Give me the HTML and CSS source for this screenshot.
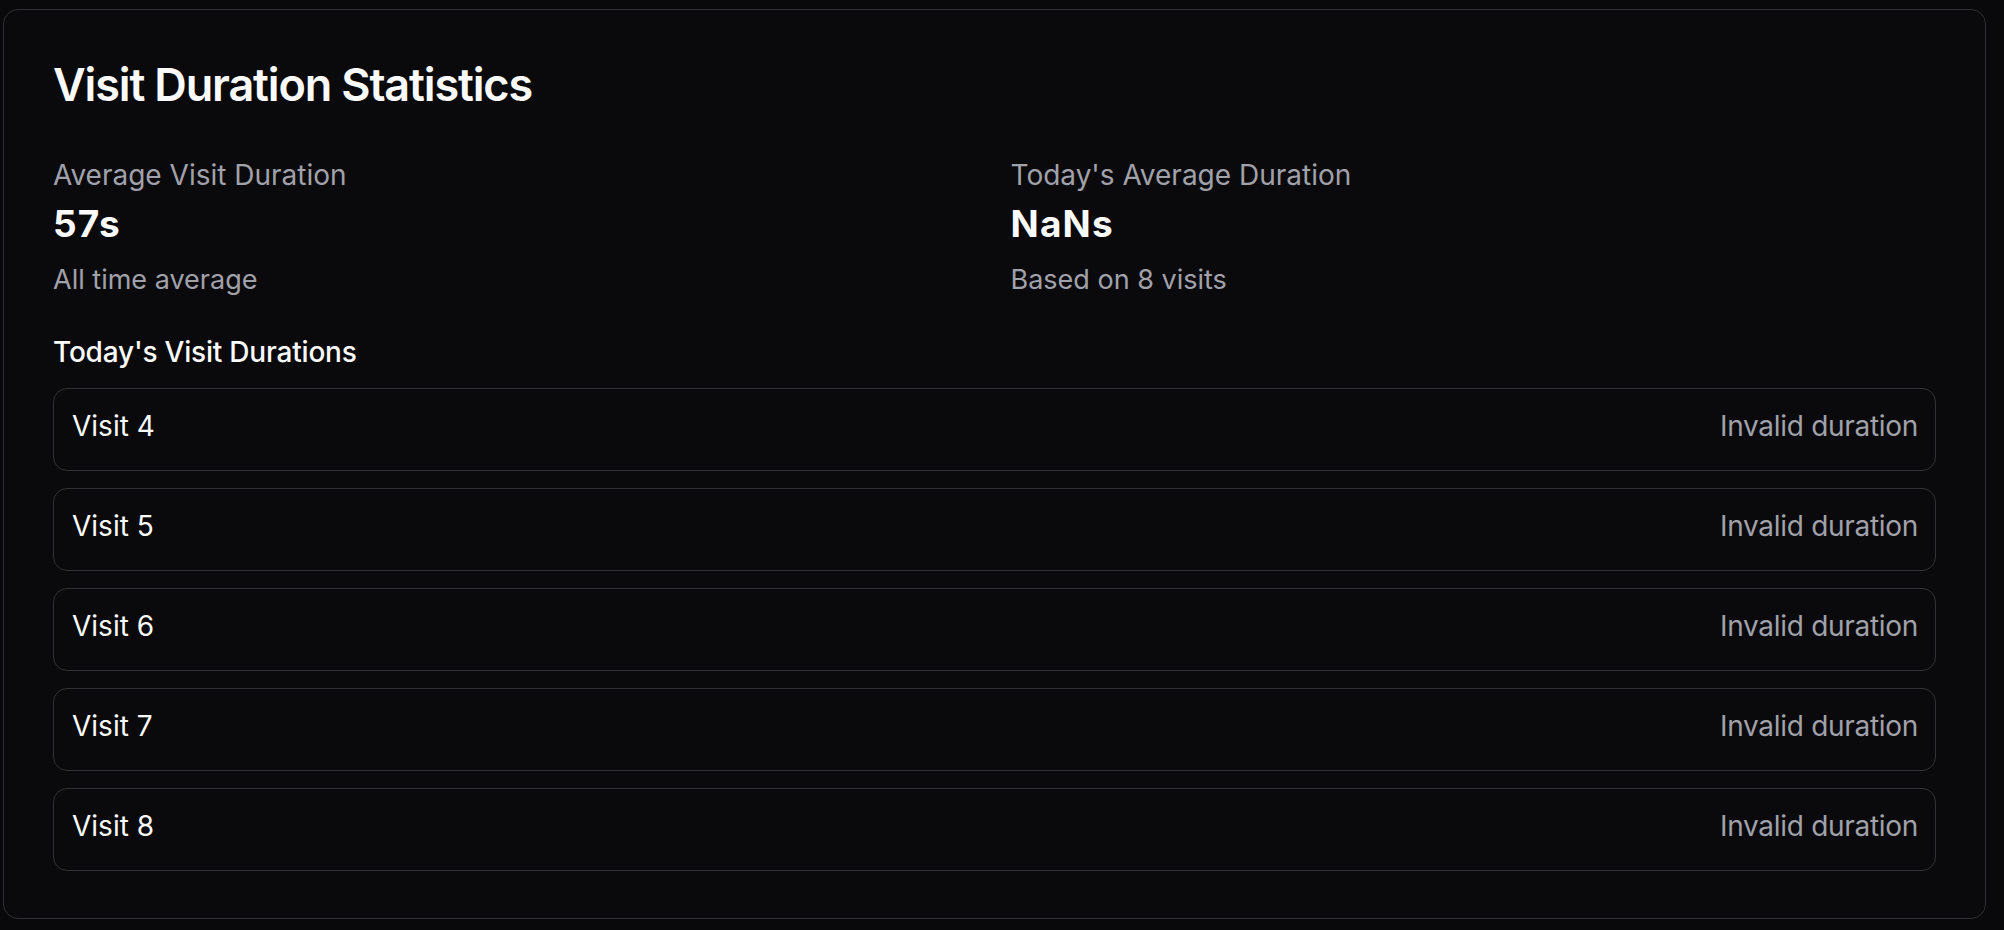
FILE: index.html
```html
<!DOCTYPE html>
<html lang="en">
<head>
<meta charset="utf-8">
<title>Visit Duration Statistics</title>
<link rel="stylesheet" href="styles.css">
</head>
<body>
<div class="card">
  <h1 class="title">Visit Duration Statistics</h1>
  <div class="stats">
    <div class="stat">
      <div class="stat-label">Average Visit Duration</div>
      <div class="stat-value">57s</div>
      <div class="stat-sub">All time average</div>
    </div>
    <div class="stat">
      <div class="stat-label">Today's Average Duration</div>
      <div class="stat-value">NaNs</div>
      <div class="stat-sub">Based on 8 visits</div>
    </div>
  </div>
  <h2 class="section-title">Today's Visit Durations</h2>
  <ul class="visits">
    <li class="visit"><span class="visit-name">Visit 4</span><span class="visit-dur">Invalid duration</span></li>
    <li class="visit"><span class="visit-name">Visit 5</span><span class="visit-dur">Invalid duration</span></li>
    <li class="visit"><span class="visit-name">Visit 6</span><span class="visit-dur">Invalid duration</span></li>
    <li class="visit"><span class="visit-name">Visit 7</span><span class="visit-dur">Invalid duration</span></li>
    <li class="visit"><span class="visit-name">Visit 8</span><span class="visit-dur">Invalid duration</span></li>
  </ul>
</div>
</body>
</html>
```
FILE: styles.css
```css
html, body {
  margin: 0;
  padding: 0;
  background: #09090b;
}
body {
  font-family: Inter, "Noto Sans", sans-serif;
  color: #fafafa;
  padding: 9px 18px 10px 3px;
}
.card {
  border: 1px solid #303034;
  border-radius: 15px;
  background: #0a0a0c;
  padding: 48px 49px 0 49px;
  height: 910px;
  box-sizing: border-box;
}
.title {
  margin: 0;
  font-size: 45px;
  line-height: 54px;
  font-weight: 600;
  letter-spacing: -1.15px;
  color: #fafafa;
}
.stats {
  display: grid;
  grid-template-columns: 1fr 1fr;
  column-gap: 32px;
  margin-top: 43px;
}
.stat-label {
  font-size: 28px;
  line-height: 40px;
  color: #a1a1aa;
}
.stat-value {
  font-size: 37px;
  line-height: 40px;
  font-weight: 700;
  letter-spacing: 1.2px;
  color: #fafafa;
  margin-top: 9px;
}
.stat-sub {
  font-size: 27px;
  line-height: 40px;
  color: #a1a1aa;
  margin-top: 16px;
}
.section-title {
  margin: 32px 0 0 0;
  font-size: 28px;
  line-height: 40px;
  font-weight: 500;
  letter-spacing: -0.2px;
  color: #fafafa;
}
.visits {
  list-style: none;
  margin: 16px 0 0 0;
  padding: 0;
  display: flex;
  flex-direction: column;
  gap: 17px;
}
.visit {
  display: flex;
  justify-content: space-between;
  align-items: flex-start;
  border: 1px solid #323236;
  border-radius: 14px;
  padding: 17px 17px 24px 18px;
  font-size: 28px;
  line-height: 40px;
}
.visit-name {
  color: #fafafa;
}
.visit-dur {
  color: #a1a1aa;
  letter-spacing: -0.3px;
}
```
